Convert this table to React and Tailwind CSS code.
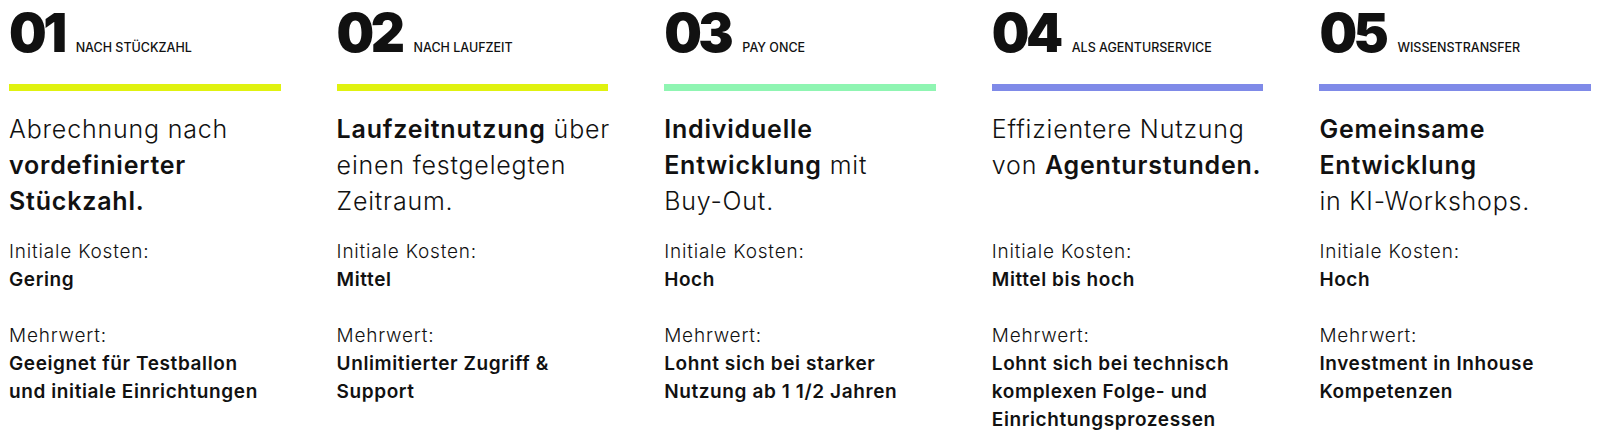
const plans = [
  {
    num: '01',
    label: 'NACH STÜCKZAHL',
    bar: 'bg-[#e0f20f]',
    title: [
      <>Abrechnung nach</>,
      <b className="font-semibold">vordefinierter</b>,
      <b className="font-semibold">Stückzahl.</b>,
    ],
    cost: 'Gering',
    value: ['Geeignet für Testballon', 'und initiale Einrichtungen'],
  },
  {
    num: '02',
    label: 'NACH LAUFZEIT',
    bar: 'bg-[#e0f20f]',
    title: [
      <><b className="font-semibold">Laufzeitnutzung</b> über</>,
      <>einen festgelegten</>,
      <>Zeitraum.</>,
    ],
    cost: 'Mittel',
    value: ['Unlimitierter Zugriff &', 'Support'],
  },
  {
    num: '03',
    label: 'PAY ONCE',
    bar: 'bg-[#8ff5b2]',
    title: [
      <b className="font-semibold">Individuelle</b>,
      <><b className="font-semibold">Entwicklung</b> mit</>,
      <>Buy-Out.</>,
    ],
    cost: 'Hoch',
    value: ['Lohnt sich bei starker', 'Nutzung ab 1 1/2 Jahren'],
  },
  {
    num: '04',
    label: 'ALS AGENTURSERVICE',
    bar: 'bg-[#7f8ae8]',
    title: [
      <>Effizientere Nutzung</>,
      <>von <b className="font-semibold">Agenturstunden.</b></>,
    ],
    cost: 'Mittel bis hoch',
    value: ['Lohnt sich bei technisch', 'komplexen Folge- und', 'Einrichtungsprozessen'],
  },
  {
    num: '05',
    label: 'WISSENSTRANSFER',
    bar: 'bg-[#7f8ae8]',
    title: [
      <b className="font-semibold">Gemeinsame</b>,
      <b className="font-semibold">Entwicklung</b>,
      <>in KI-Workshops.</>,
    ],
    cost: 'Hoch',
    value: ['Investment in Inhouse', 'Kompetenzen'],
  },
]

function PlanColumn({ plan }) {
  return (
    <div className="flex flex-col">
      {/* number + small label */}
      <div className="flex items-baseline gap-[12px]">
        <span className="text-[53px] leading-none font-black tracking-[-3.5px] text-[#111]">
          {plan.num}
        </span>
        <span className="text-[12.5px] leading-none font-medium text-[#111]">
          {plan.label}
        </span>
      </div>

      {/* coloured bar */}
      <div className={`h-[7px] mt-[24px] ${plan.bar}`} />

      {/* headline, always three lines tall */}
      <div className="mt-[20px] h-[108px] text-[25px] leading-[36px] font-light tracking-[0.8px] text-[#111] whitespace-nowrap">
        {plan.title.map((line, i) => (
          <p key={i}>{line}</p>
        ))}
      </div>

      {/* details */}
      <div className="mt-[19px] text-[19px] leading-[28px] text-[#111] whitespace-nowrap">
        <p className="font-light tracking-[0.8px]">Initiale Kosten:</p>
        <p className="font-semibold tracking-[0.6px]">{plan.cost}</p>
        <p className="font-light tracking-[0.8px] mt-[28px]">Mehrwert:</p>
        {plan.value.map((line, i) => (
          <p key={i} className="font-semibold tracking-[0.6px]">{line}</p>
        ))}
      </div>
    </div>
  )
}

export default function App() {
  return (
    <div className="bg-white w-[1600px] h-[436px] px-[9px] pt-[7px] font-['Inter',sans-serif] overflow-hidden">
      <div className="grid grid-cols-5 gap-x-[56px]">
        {plans.map((plan) => (
          <PlanColumn key={plan.num} plan={plan} />
        ))}
      </div>
    </div>
  )
}
